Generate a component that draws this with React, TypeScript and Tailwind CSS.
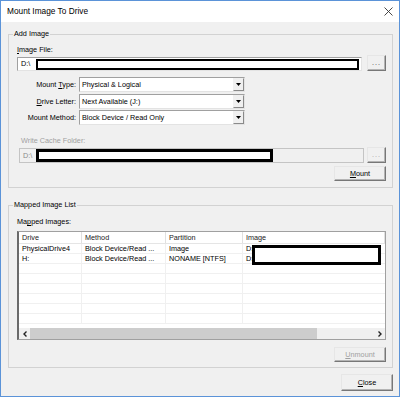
import React from 'react';

const font = "font-['Liberation_Sans',Arial,sans-serif]";

function Arrow() {
  return (
    <svg width="5" height="3" viewBox="0 0 5 3">
      <path d="M0 0h5L2.5 3z" fill="#000" />
    </svg>
  );
}

function Select({ value }: { value: string }) {
  return (
    <div className="flex h-[15px] w-[166px] items-stretch border border-[#a0a0a0] border-b-[#e3e3e3] border-r-[#e3e3e3] bg-white">
      <span className="flex flex-1 items-center pl-[2px]">{value}</span>
      <div className="flex w-[11px] items-center justify-center border border-[#f0f0f0] border-b-[#8a8a8a] border-r-[#8a8a8a] bg-[#f0f0f0]">
        <Arrow />
      </div>
    </div>
  );
}

function Btn({ children, disabled, w = 'w-[52px]', h = 'h-[15px]' }: { children: React.ReactNode; disabled?: boolean; w?: string; h?: string }) {
  return (
    <div
      className={`flex ${w} ${h} items-center justify-center border border-[#e6e6e6] border-b-[#777] border-r-[#777] bg-[#f0f0f0] shadow-[inset_-1px_-1px_0_#b4b4b4] ${disabled ? 'text-[#a0a0a0]' : 'text-black'}`}
    >
      {children}
    </div>
  );
}

function Redact({ className }: { className: string }) {
  return <div className={`border-black bg-white ${className}`} />;
}

function Chevron({ dir }: { dir: 'l' | 'r' }) {
  return (
    <svg width="4" height="6" viewBox="0 0 4 6">
      <path d={dir === 'l' ? 'M3.5 0.5 1 3l2.5 2.5' : 'M0.5 0.5 3 3 0.5 5.5'} fill="none" stroke="#222" strokeWidth="1.4" />
    </svg>
  );
}

const rows = [
  ['PhysicalDrive4', 'Block Device/Read ...', 'Image', 'D:'],
  ['H:', 'Block Device/Read ...', 'NONAME [NTFS]', 'D:'],
  ['', '', '', ''],
  ['', '', '', ''],
  ['', '', '', ''],
  ['', '', '', ''],
  ['', '', '', ''],
  ['', '', '', ''],
];

export default function App() {
  return (
    <div className={`flex h-[397px] w-[400px] flex-col border border-[#5b93d8] text-[7.25px] leading-none text-black ${font}`}>
      {/* Title bar */}
      <div className="flex h-[21px] items-center justify-between bg-white pl-[6px] pr-[6px]">
        <span className="text-[8.3px]">Mount Image To Drive</span>
        <svg width="9" height="9" viewBox="0 0 9 9">
          <path d="M0.5 0.5l8 8M8.5 0.5l-8 8" stroke="#333" strokeWidth="0.9" />
        </svg>
      </div>

      <div className="flex flex-1 flex-col bg-[#f0f0f0] pl-[7px] pr-[6px]">
        {/* Add Image */}
        <div className="relative mt-[12px] border border-[#d2d2d2] pb-[6px] pl-[8px] pr-[6px]">
          <span className="absolute left-[4px] top-[-5px] bg-[#f0f0f0] px-[1px]">Add Image</span>

          <div className="mt-[10px] flex h-[10px] items-center">
            <span><span className="underline">I</span>mage File:</span>
          </div>
          <div className="flex h-[16px] items-end gap-[5px]">
            <div className="flex h-[14px] flex-1 items-center border border-[#a0a0a0] border-b-[#e3e3e3] border-r-[#e3e3e3] bg-white pl-[3px]">
              <span className="w-[15px]">D:\</span>
              <Redact className="h-[11px] flex-1 border-2" />
              <span className="w-[2px]" />
            </div>
            <Btn w="w-[19px]" h="h-[16px]">
              <span className="tracking-[1px] text-[#444]">...</span>
            </Btn>
          </div>

          <div className="mt-[6px] flex h-[15px] items-center gap-[3px]">
            <span className="w-[59px] text-right">Mount <span className="underline">T</span>ype:</span>
            <Select value="Physical & Logical" />
          </div>
          <div className="mt-[2px] flex h-[15px] items-center gap-[3px]">
            <span className="w-[59px] text-right"><span className="underline">D</span>rive Letter:</span>
            <Select value="Next Available (J:)" />
          </div>
          <div className="mt-[1px] flex h-[15px] items-center gap-[3px]">
            <span className="w-[59px] text-right">Mount Method:</span>
            <Select value="Block Device / Read Only" />
          </div>

          <div className="mt-[11px] flex h-[10px] items-center pl-[4px] text-[#a0a0a0]">Write Cache Folder:</div>
          <div className="mt-[1px] flex h-[16px] items-end gap-[3px] pl-[2px]">
            <div className="flex h-[15px] flex-1 items-center border border-[#c4c4c4] bg-[#f0f0f0] pl-[3px] text-[#8a8a8a]">
              <span className="w-[13px]">D:\</span>
              <Redact className="h-[13px] w-[237px] border-[3px]" />
            </div>
            <Btn w="w-[19px]" h="h-[16px]" disabled>
              <span className="tracking-[1px]">...</span>
            </Btn>
          </div>

          <div className="mt-[3px] flex justify-end">
            <Btn>
              <span><span className="underline">M</span>ount</span>
            </Btn>
          </div>
        </div>

        {/* Mapped Image List */}
        <div className="relative mt-[17px] border border-[#d2d2d2] pb-[5px] pl-[8px] pr-[6px]">
          <span className="absolute left-[4px] top-[-5px] bg-[#f0f0f0] px-[1px]">Mapped Image List</span>

          <div className="mt-[11px] flex h-[10px] items-center">
            <span>Ma<span className="underline">p</span>ped Images:</span>
          </div>

          <div className="relative mt-[4px] flex h-[109px] flex-col border border-[#a0a0a0] border-l-2 border-l-[#6a6a6a] bg-white">
            <div className="grid h-[12px] grid-cols-[63px_84px_77px_1fr] border-b border-[#e5e5e5]">
              {['Drive', 'Method', 'Partition', 'Image'].map((h) => (
                <div key={h} className="flex items-center border-r border-[#e0e0e0] pl-[3px] text-[#222]">
                  {h}
                </div>
              ))}
            </div>
            {rows.map((r, i) => (
              <div key={i} className="grid h-[10px] grid-cols-[63px_84px_77px_1fr] border-b border-[#f0f0f0]">
                {r.map((c, j) => (
                  <div key={j} className={`flex items-center pl-[3px] ${j < 3 ? 'border-r border-[#f0f0f0]' : ''}`}>
                    {c}
                  </div>
                ))}
              </div>
            ))}
            <div className="flex-1" />
            <div className="flex h-[11px] items-stretch bg-[#f0f0f0]">
              <div className="flex w-[11px] items-center justify-center">
                <Chevron dir="l" />
              </div>
              <div className="w-[287px] bg-[#cdcdcd]" />
              <div className="flex-1" />
              <div className="flex w-[11px] items-center justify-center">
                <Chevron dir="r" />
              </div>
            </div>
            <Redact className="absolute left-[233px] top-[13px] h-[20px] w-[129px] border-[3px]" />
          </div>

          <div className="mt-[7px] flex justify-end">
            <Btn disabled>
              <span><span className="underline">U</span>nmount</span>
            </Btn>
          </div>
        </div>

        <div className="mt-[6px] flex justify-end">
          <Btn h="h-[17px]">
            <span><span className="underline">C</span>lose</span>
          </Btn>
        </div>
      </div>
    </div>
  );
}
